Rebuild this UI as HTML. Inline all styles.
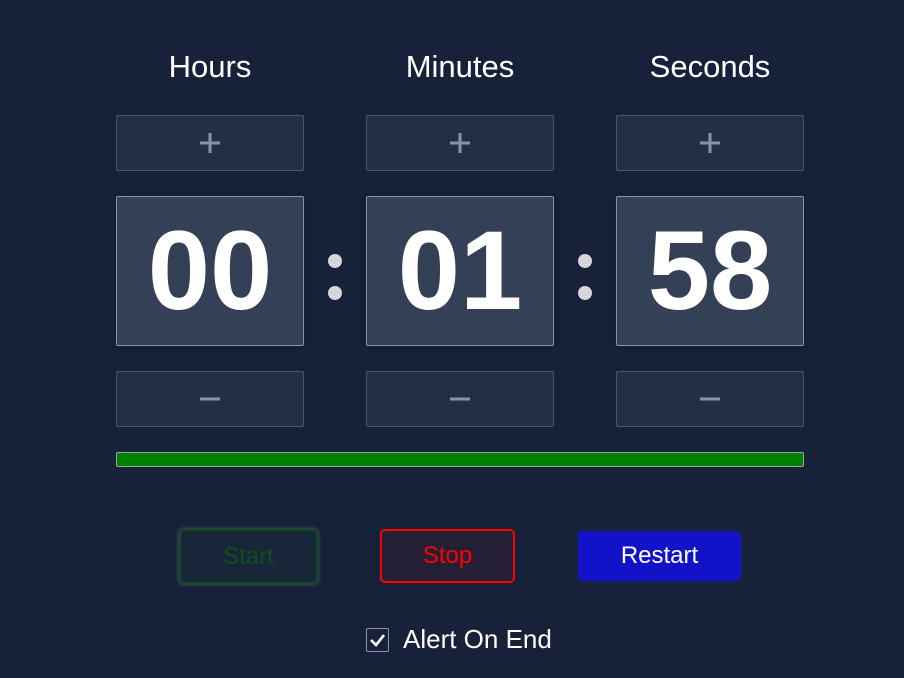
<!DOCTYPE html>
<html><head><style>
body{margin:0;width:904px;height:678px;background:#17223a;font-family:"Liberation Sans",sans-serif;position:relative;overflow:hidden}
.a{position:absolute;box-sizing:border-box}
.t{color:#fff;font-size:31px;text-align:center;width:188px;top:49px}
.pm{height:56px;width:188px;background:#232f44;border:1px solid #4a556a;border-radius:2px}
.pm svg{position:absolute;left:82px;top:16px}
.d{top:196px;height:150px;width:188px;background:#344055;border:1px solid #8a93a3;border-radius:2px;color:#fff;font-weight:bold;font-size:112px;text-align:center;line-height:148px;box-shadow:0 0 14px rgba(0,0,0,.25)}
.c{width:14px;height:14px;border-radius:50%;background:#d5d6da}
.b{font-size:24px;text-align:center;border-radius:5px}
</style></head><body>
<div class="a t" style="left:116px">Hours</div>
<div class="a t" style="left:366px">Minutes</div>
<div class="a t" style="left:616px">Seconds</div>
<div class="a pm" style="left:116px;top:115px"><svg width="22" height="22"><path d="M11 1V21M1 11H21" stroke="#8793a6" stroke-width="3"/></svg></div>
<div class="a pm" style="left:366px;top:115px"><svg width="22" height="22"><path d="M11 1V21M1 11H21" stroke="#8793a6" stroke-width="3"/></svg></div>
<div class="a pm" style="left:616px;top:115px"><svg width="22" height="22"><path d="M11 1V21M1 11H21" stroke="#8793a6" stroke-width="3"/></svg></div>
<div class="a d" style="left:116px">00</div>
<div class="a d" style="left:366px">01</div>
<div class="a d" style="left:616px">58</div>
<div class="a c" style="left:328px;top:254px"></div><div class="a c" style="left:328px;top:286px"></div>
<div class="a c" style="left:578px;top:254px"></div><div class="a c" style="left:578px;top:286px"></div>
<div class="a pm" style="left:116px;top:371px"><svg width="22" height="22"><path d="M1 11H21" stroke="#8793a6" stroke-width="3"/></svg></div>
<div class="a pm" style="left:366px;top:371px"><svg width="22" height="22"><path d="M1 11H21" stroke="#8793a6" stroke-width="3"/></svg></div>
<div class="a pm" style="left:616px;top:371px"><svg width="22" height="22"><path d="M1 11H21" stroke="#8793a6" stroke-width="3"/></svg></div>
<div class="a" style="left:116px;top:452px;width:688px;height:15px;background:#008000;border:1px solid #a0a0a0;border-radius:2px"></div>
<div class="a b" style="left:179px;top:529px;width:139px;height:55px;border:2px solid #0f4d1a;background:#18263a;color:#0d4f1a;line-height:51px;box-shadow:0 0 5px rgba(200,200,200,.35)">Start</div>
<div class="a b" style="left:380px;top:529px;width:135px;height:54px;border:2px solid #f00;background:#241f35;color:#f00;line-height:50px">Stop</div>
<div class="a b" style="left:578px;top:531px;width:163px;height:50px;background:#1212c8;color:#fff;line-height:50px">Restart</div>
<div class="a" style="left:366px;top:628px;width:23px;height:24px;border:1px solid #8a93a3;border-radius:2px">
<svg width="21" height="22" viewBox="0 0 21 22"><path d="M4 11 L9 16 L17 6" stroke="#fff" stroke-width="2.6" fill="none"/></svg></div>
<div class="a" style="left:403px;top:624px;color:#fff;font-size:26px">Alert On End</div>
</body></html>
